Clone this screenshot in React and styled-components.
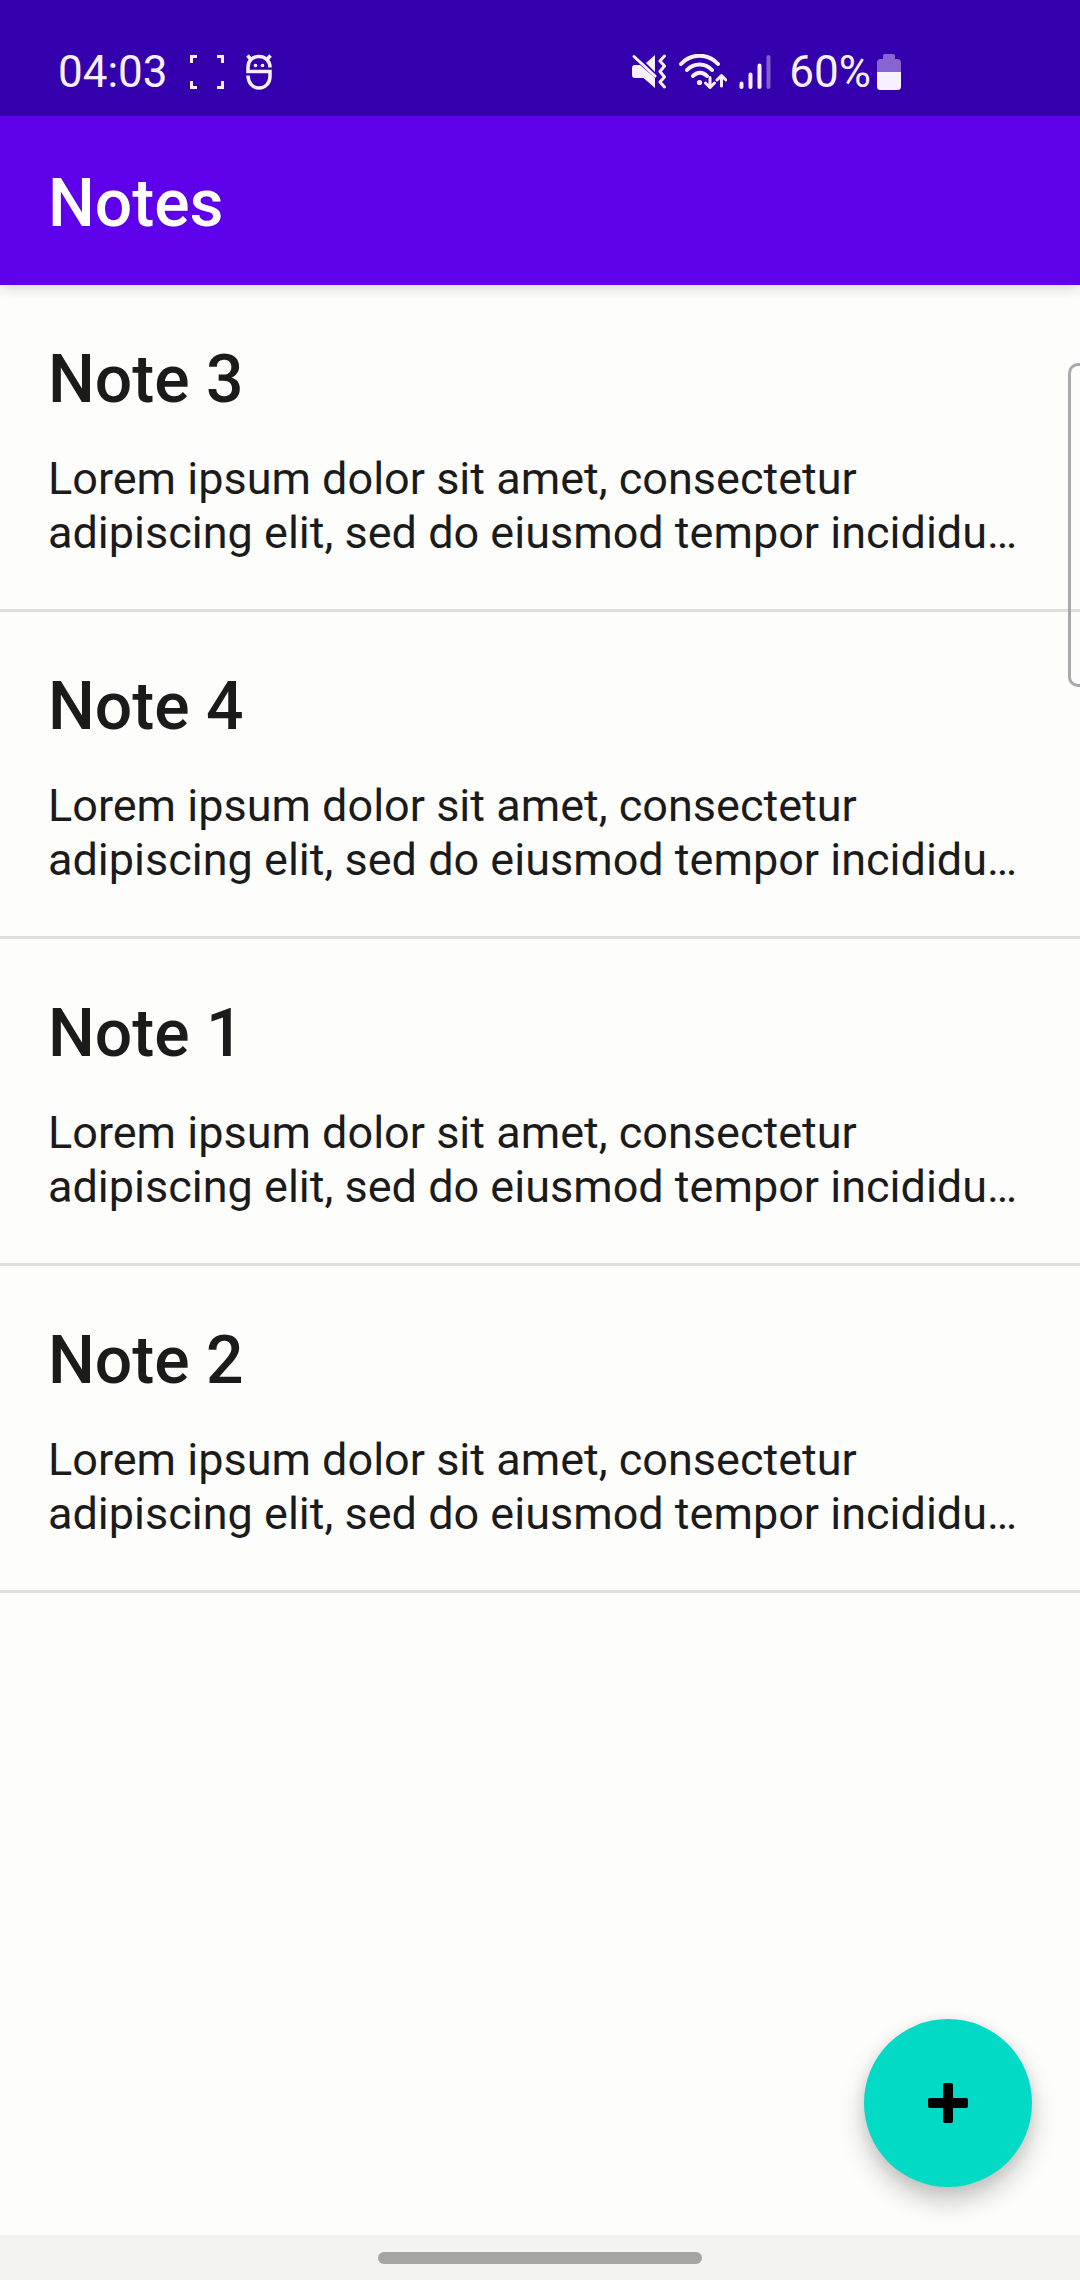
import React from "react";
import styled, { createGlobalStyle } from "styled-components";

const GlobalStyle = createGlobalStyle`
  *, *::before, *::after { box-sizing: border-box; }
  body {
    margin: 0;
    background: #fdfdfc;
    color: #1b1b1b;
    font-family: Roboto, "Noto Sans", sans-serif;
  }
`;

const Screen = styled.div`
  display: flex;
  flex-direction: column;
  min-height: 100vh;
`;

const StatusBar = styled.div`
  display: flex;
  align-items: center;
  justify-content: space-between;
  height: 116px;
  padding: 28px 179px 0 58px;
  background: #3400ae;
  color: #f6f0ff;
  font-size: 44px;
  line-height: 52px;
  z-index: 2;
`;

const StatusGroup = styled.div`
  display: flex;
  align-items: center;
  gap: ${(p) => p.$gap}px;
`;

const BatteryLevel = styled.div`
  display: flex;
  align-items: center;
  gap: 6px;
`;

const Glyph = styled.svg`
  display: block;
  flex: none;
  fill: none;
  stroke: currentColor;
  stroke-width: 3;
`;

const AppBar = styled.header`
  display: flex;
  align-items: center;
  height: 169px;
  padding: 6px 48px 0;
  background: #5e00ea;
  color: #ffffff;
  box-shadow: 0 2px 14px rgba(0, 0, 0, 0.18);
  z-index: 1;
`;

const Heading = styled.h1`
  margin: 0;
  font-size: 66px;
  font-weight: 500;
  line-height: 78px;
`;

const Content = styled.main`
  position: relative;
  flex: 1;
`;

const NoteList = styled.ul`
  margin: 0;
  padding: 0;
  list-style: none;
`;

const NoteItem = styled.li`
  padding: 53px 48px 49px;
  border-bottom: 3px solid #dededd;
`;

const NoteTitle = styled.h2`
  margin: 0 0 30px;
  font-size: 66px;
  font-weight: 500;
  line-height: 84px;
`;

const NoteText = styled.p`
  margin: 0;
  font-size: 45px;
  line-height: 54px;
`;

const EdgeHandle = styled.div`
  position: absolute;
  top: 78px;
  right: 0;
  width: 12px;
  height: 324px;
  border: 3px solid #a9a9ac;
  border-right: 0;
  border-radius: 10px 0 0 10px;
`;

const AddButton = styled.button`
  position: absolute;
  right: 48px;
  bottom: 48px;
  display: grid;
  place-items: center;
  width: 168px;
  height: 168px;
  padding: 0;
  border: 0;
  border-radius: 50%;
  background: #03dac5;
  color: #000000;
  box-shadow: 0 14px 26px rgba(0, 0, 0, 0.22), 0 2px 14px rgba(0, 0, 0, 0.08);
`;

const NavigationBar = styled.div`
  display: flex;
  justify-content: center;
  align-items: center;
  height: 45px;
  background: #f3f3f1;
`;

const HomeHandle = styled.div`
  width: 30%;
  height: 12px;
  border-radius: 6px;
  background: #a5a5a4;
`;

const preview =
  "Lorem ipsum dolor sit amet, consectetur adipiscing elit, sed do eiusmod tempor incididu…";

const notes = ["Note 3", "Note 4", "Note 1", "Note 2"];

function CaptureIcon() {
  return (
    <Glyph width="34" height="34" viewBox="0 0 34 34" aria-hidden="true">
      <path d="M1.5 8V1.5H7M27 1.5h5.5V8M32.5 26v6.5H27M7 32.5H1.5V26" />
    </Glyph>
  );
}

function RobotIcon() {
  return (
    <Glyph width="26" height="38" viewBox="0 0 26 38" aria-hidden="true">
      <path
        d="M24 14.5C24 7.500 19 3.500 13 3.500S2 7.500 2 14v4.500h22v5c0 7-5 11.500-11 11.500S2 30 2 22.500M1.500 2.500L5 6.500M24.500 2.500L21 6.500"
        strokeWidth="3.5"
      />
      <circle cx="9.500" cy="12.500" r="1.800" fill="currentColor" stroke="none" />
      <circle cx="16.500" cy="12.500" r="1.800" fill="currentColor" stroke="none" />
    </Glyph>
  );
}

function MuteVibrateIcon() {
  return (
    <Glyph width="36" height="36" viewBox="0 0 36 36" aria-hidden="true">
      <path
        d="M4 11h5l15 13v10L12.500 24H4c-2 0-3-1-3-3v-7c0-2 1-3 3-3zM15 9l9-8v17z"
        fill="currentColor"
        stroke="none"
      />
      <path d="M3 2.500L24 22" strokeLinecap="round" />
      <path
        d="M33.500 2l-4.500 5 4.500 5-4.500 5.500 4.500 5.500-4.500 5 4.500 5"
        strokeLinecap="round"
        strokeLinejoin="round"
      />
    </Glyph>
  );
}

function WifiIcon() {
  return (
    <Glyph width="48" height="36" viewBox="0 0 48 36" aria-hidden="true" strokeLinecap="round" strokeLinejoin="round">
      <path d="M2 10C12-1 29-1 39 10M8 16C15 8.500 26 8.500 33 16M14 22c4-4.500 10-4.500 14 0" strokeWidth="4" />
      <circle cx="20.500" cy="28.500" r="2.600" fill="currentColor" stroke="none" />
      <path d="M31 23.500v10M26.500 29l4.500 4.500 4.500-4.500M42.500 32V21.500M38 26l4.500-4.500L47 26" />
    </Glyph>
  );
}

function SignalIcon() {
  return (
    <Glyph width="38" height="36" viewBox="0 0 38 36" aria-hidden="true">
      <g strokeWidth="4" strokeLinecap="round">
        <path d="M2.500 29.500v3.500M11.500 20.500V33M20.500 11.500V33" />
        <path d="M29.500 3v30" opacity="0.4" />
      </g>
    </Glyph>
  );
}

function BatteryIcon() {
  return (
    <Glyph width="24" height="36" viewBox="0 0 24 36" aria-hidden="true">
      <path
        d="M0 18V9c0-3 1-4 4-4h2V2c0-1.500.5-2 2-2h8c1.500 0 2 .5 2 2v3h2c3 0 4 1 4 4v9z"
        fill="currentColor"
        stroke="none"
        opacity="0.42"
      />
      <path d="M0 18h24v14c0 3-1 4-4 4H4c-3 0-4-1-4-4z" fill="currentColor" stroke="none" />
    </Glyph>
  );
}

function PlusIcon() {
  return (
    <svg width="40" height="40" viewBox="0 0 40 40" aria-hidden="true">
      <rect x="0" y="15" width="40" height="10" rx="2" />
      <rect x="15" y="0" width="10" height="40" rx="2" />
    </svg>
  );
}

export default function App() {
  return (
    <Screen>
      <GlobalStyle />
      <StatusBar>
        <StatusGroup $gap={22}>
          <span>04:03</span>
          <CaptureIcon />
          <RobotIcon />
        </StatusGroup>
        <StatusGroup $gap={12}>
          <MuteVibrateIcon />
          <WifiIcon />
          <SignalIcon />
          <BatteryLevel>
            <span>60%</span>
            <BatteryIcon />
          </BatteryLevel>
        </StatusGroup>
      </StatusBar>
      <AppBar>
        <Heading>Notes</Heading>
      </AppBar>
      <Content>
        <NoteList>
          {notes.map((title) => (
            <NoteItem key={title}>
              <NoteTitle>{title}</NoteTitle>
              <NoteText>{preview}</NoteText>
            </NoteItem>
          ))}
        </NoteList>
        <EdgeHandle />
        <AddButton type="button" aria-label="Add note">
          <PlusIcon />
        </AddButton>
      </Content>
      <NavigationBar>
        <HomeHandle />
      </NavigationBar>
    </Screen>
  );
}
